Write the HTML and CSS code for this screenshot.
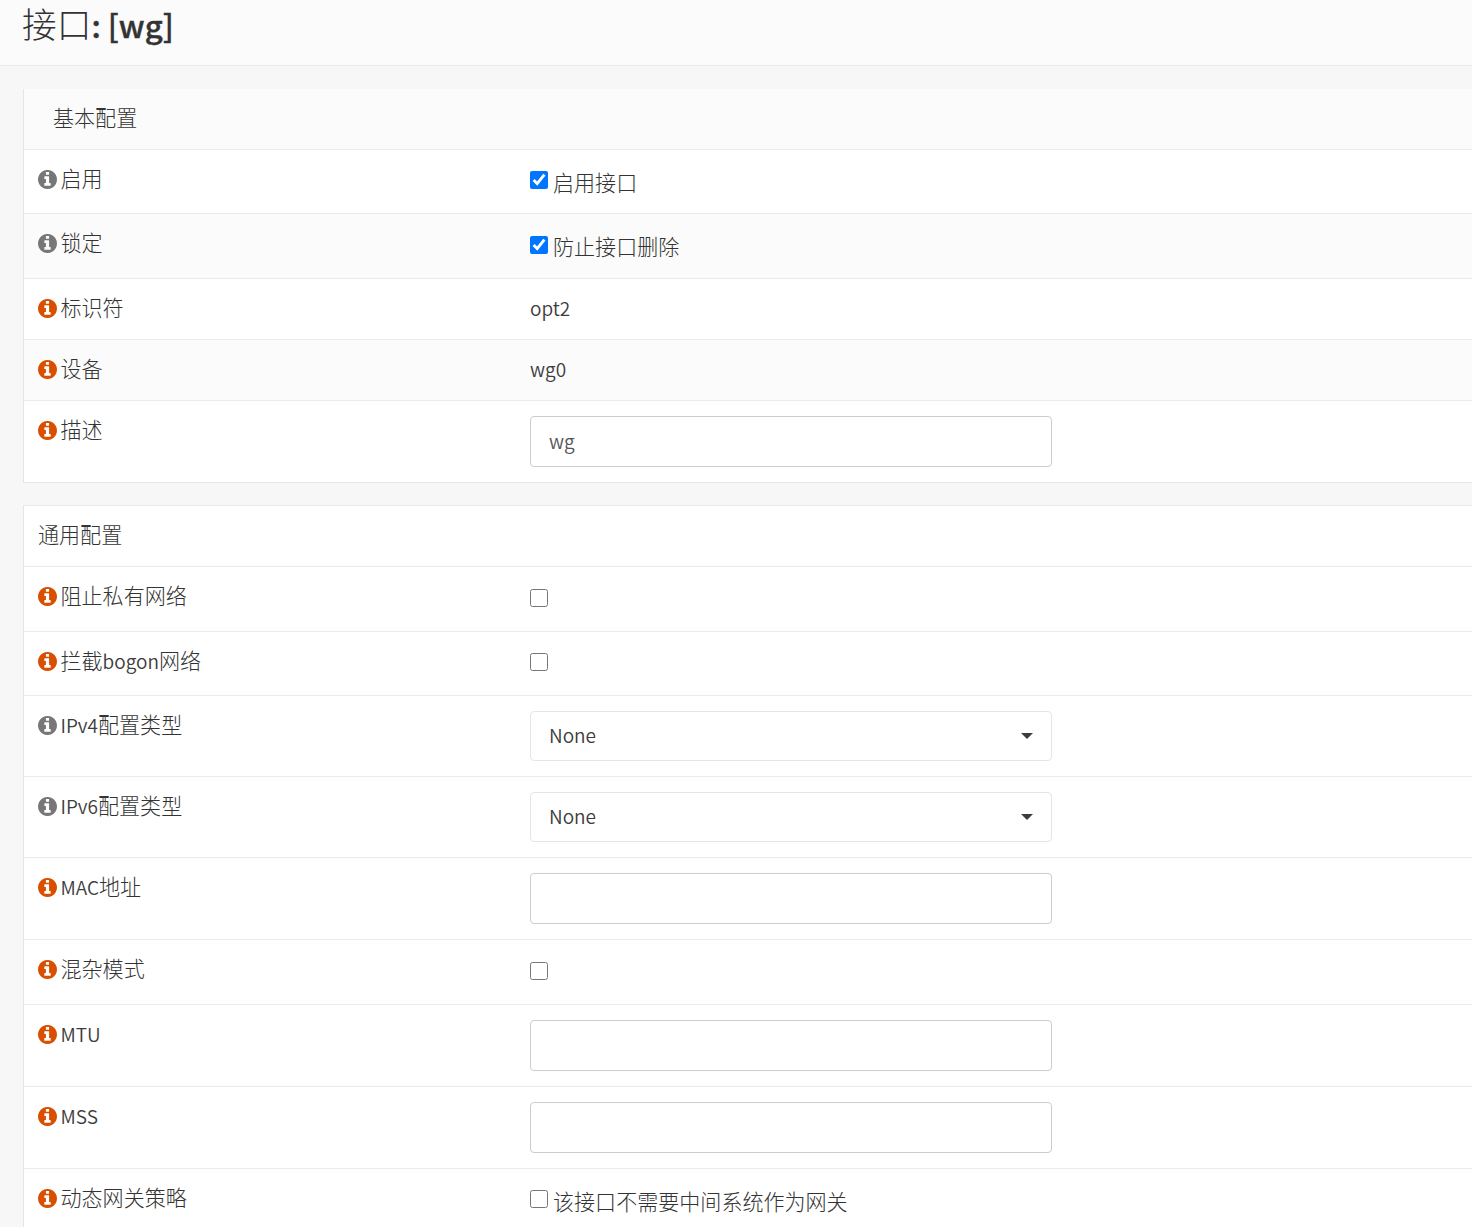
FILE: index.html
```html
<!DOCTYPE html>
<html lang="zh-CN">
<head>
<meta charset="utf-8">
<title>接口: [wg]</title>
<link rel="stylesheet" href="styles.css">
</head>
<body>
<svg width="0" height="0" class="defs"><symbol id="info" viewBox="128 128 1536 1536"><path d="M1152 1376v-160q0-14-9-23t-23-9h-96v-512q0-14-9-23t-23-9h-320q-14 0-23 9t-9 23v160q0 14 9 23t23 9h96v320h-96q-14 0-23 9t-9 23v160q0 14 9 23t23 9h448q14 0 23-9t9-23zm-128-896v-160q0-14-9-23t-23-9h-192q-14 0-23 9t-9 23v160q0 14 9 23t23 9h192q14 0 23-9t9-23zm640 416q0 209-103 385.5t-279.5 279.5-385.5 103-385.5-103-279.5-279.5-103-385.5 103-385.5 279.5-279.5 385.5-103 385.5 103 279.5 279.5 103 385.5z"/></symbol></svg>
<header class="page-head"><h1>接口<b>: [wg]</b></h1></header>
<main class="content">
  <section class="panel panel-basic">
    <div class="row title title-inset">基本配置</div>
    <div class="row h64"><div class="label"><svg class="info muted"><use href="#info"/></svg><span>启用</span></div><label class="check"><input type="checkbox" checked><span>启用接口</span></label></div>
    <div class="row h65 alt"><div class="label"><svg class="info muted"><use href="#info"/></svg><span>锁定</span></div><label class="check"><input type="checkbox" checked><span>防止接口删除</span></label></div>
    <div class="row h61"><div class="label"><svg class="info"><use href="#info"/></svg><span>标识符</span></div><div class="value">opt2</div></div>
    <div class="row h61 alt"><div class="label"><svg class="info"><use href="#info"/></svg><span>设备</span></div><div class="value">wg0</div></div>
    <div class="row h82"><div class="label"><svg class="info"><use href="#info"/></svg><span>描述</span></div><input class="field" type="text" value="wg"></div>
  </section>
  <section class="panel panel-general">
    <div class="row title">通用配置</div>
    <div class="row h65"><div class="label"><svg class="info"><use href="#info"/></svg><span>阻止私有网络</span></div><label class="check"><input type="checkbox"></label></div>
    <div class="row h64"><div class="label"><svg class="info"><use href="#info"/></svg><span>拦截<i>bogon</i>网络</span></div><label class="check"><input type="checkbox"></label></div>
    <div class="row h81"><div class="label"><svg class="info muted"><use href="#info"/></svg><span><i>IPv4</i>配置类型</span></div><div class="select"><span>None</span><svg class="caret" viewBox="0 0 12 6"><path d="M0 0h12L6 6z"/></svg></div></div>
    <div class="row h81"><div class="label"><svg class="info muted"><use href="#info"/></svg><span><i>IPv6</i>配置类型</span></div><div class="select"><span>None</span><svg class="caret" viewBox="0 0 12 6"><path d="M0 0h12L6 6z"/></svg></div></div>
    <div class="row h82"><div class="label"><svg class="info"><use href="#info"/></svg><span><i>MAC</i>地址</span></div><input class="field" type="text"></div>
    <div class="row h65"><div class="label"><svg class="info"><use href="#info"/></svg><span>混杂模式</span></div><label class="check"><input type="checkbox"></label></div>
    <div class="row h82"><div class="label"><svg class="info"><use href="#info"/></svg><span><i>MTU</i></span></div><input class="field" type="text"></div>
    <div class="row h82"><div class="label"><svg class="info"><use href="#info"/></svg><span><i>MSS</i></span></div><input class="field" type="text"></div>
    <div class="row h64"><div class="label"><svg class="info"><use href="#info"/></svg><span>动态网关策略</span></div><label class="check"><input type="checkbox"><span>该接口不需要中间系统作为网关</span></label></div>
  </section>
</main>
</body>
</html>
```
FILE: styles.css
```css
* { box-sizing: border-box; }
body {
  margin: 0;
  height: 1227px;
  overflow: hidden;
  background: #f7f7f7;
  color: #333;
  font: 300 21.05px/30px "Noto Sans CJK SC", sans-serif;
}
.defs { display: block; height: 0; }
.page-head {
  height: 66px;
  padding-left: 22px;
  background: #fbfbfb;
  border-bottom: 1px solid #e8e8e8;
}
h1 { margin: 0; font-size: 34.7px; line-height: 46px; font-weight: 300; white-space: nowrap; }
h1 b { font-size: 31.2px; font-weight: 500; -webkit-text-stroke: 0.4px; }
.content { padding: 23px 0 0 23px; }
.panel { border-left: 1px solid #e5e5e5; background: #fff; }
.panel-basic { border-bottom: 1px solid #e5e5e5; margin-bottom: 22px; }
.row {
  display: grid;
  grid-template-columns: 492px 1fr;
  align-items: start;
  padding: 15px 0 0 14px;
  border-top: 1px solid #ebebeb;
}
.title { display: block; height: 61px; line-height: 27px; }
.title-inset { height: 60px; padding: 15px 0 0 29px; border-top: 0; background: #fbfbfb; }
.h61 { height: 61px; }
.h64 { height: 64px; }
.h65 { height: 65px; }
.h81 { height: 81px; }
.h82 { height: 82px; }
.alt { background: #fbfbfb; }
.label { display: flex; height: 30px; gap: 3.5px; line-height: 26px; white-space: nowrap; }
.label i, .value {
  color: #3c3c3b;
  font: 350 19px "Noto Sans CJK SC DemiLight", "Noto Sans CJK SC", sans-serif;
  line-height: inherit;
}
.value { line-height: 28px; }
.info { width: 19px; height: 19px; margin-top: 5px; fill: #d94f00; flex: none; }
.muted { fill: #777; }
.check { display: flex; gap: 5px; }
.check input { width: 18px; height: 18px; margin: 6px 0 0; flex: none; }
.h65 .check input { margin-top: 7px; }
.check span { padding-top: 2px; }
.field, .select {
  width: 522px;
  height: 51px;
  padding: 0 18px 2px;
  border: 1px solid #ccc;
  border-radius: 4px;
  background: #fff;
  color: #555;
  font: 350 19px/30px "Noto Sans CJK SC DemiLight", "Noto Sans CJK SC", sans-serif;
}
.select {
  display: flex;
  align-items: center;
  justify-content: space-between;
  height: 50px;
  padding-bottom: 0;
  border-color: #e5e5e5;
  color: #3c3c3b;
}
.select span { padding-bottom: 2px; }
.caret { width: 12px; height: 6px; fill: #3c3c3b; }
```
